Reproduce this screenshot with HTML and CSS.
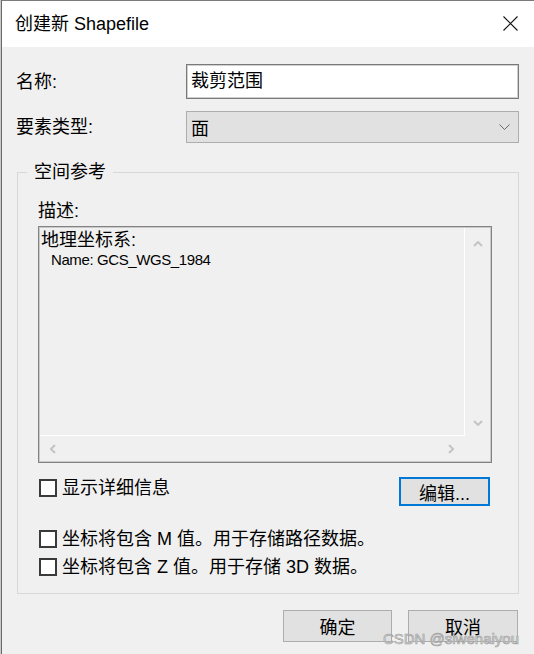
FILE: index.html
```html
<!DOCTYPE html>
<html lang="zh-CN">
<head>
<meta charset="utf-8">
<title>创建新 Shapefile</title>
<link rel="stylesheet" href="styles.css">
</head>
<body>
<div class="window">
  <div class="titlebar">
    <span class="title">创建新 Shapefile</span>
    <svg class="close" width="15" height="15" viewBox="0 0 15 15"><path d="M0.5 0.5 L14.5 14.5 M14.5 0.5 L0.5 14.5" stroke="#111" stroke-width="1.1" fill="none"/></svg>
  </div>
  <div class="content">
    <div class="form">
      <span class="lbl">名称:</span>
      <div class="input">裁剪范围</div>
      <span class="lbl">要素类型:</span>
      <div class="select"><span>面</span><svg width="11" height="6" viewBox="0 0 11 6"><path d="M0.5 0.5 L5.5 5.5 L10.5 0.5" stroke="#6a6a6a" stroke-width="1" fill="none"/></svg></div>
    </div>
    <fieldset class="group">
      <legend class="legend">空间参考</legend>
      <div class="group-inner">
        <div class="lbl desc">描述:</div>
        <div class="textbox">
          <div class="text-area">
            <div class="line1">地理坐标系:</div>
            <div class="line2">Name: GCS_WGS_1984</div>
          </div>
          <div class="vscroll">
            <svg width="10" height="6" viewBox="0 0 10 6"><path d="M1 5 L5 1 L9 5" stroke="#c4c4c4" stroke-width="2" fill="none"/></svg>
            <svg width="10" height="6" viewBox="0 0 10 6"><path d="M1 1 L5 5 L9 1" stroke="#c4c4c4" stroke-width="2" fill="none"/></svg>
          </div>
          <div class="hscroll">
            <svg width="6" height="10" viewBox="0 0 6 10"><path d="M5 1 L1 5 L5 9" stroke="#c4c4c4" stroke-width="2" fill="none"/></svg>
            <svg width="6" height="10" viewBox="0 0 6 10"><path d="M1 1 L5 5 L1 9" stroke="#c4c4c4" stroke-width="2" fill="none"/></svg>
          </div>
          <div class="corner"></div>
        </div>
        <div class="detail-row">
          <div class="check"><span class="box"></span><span>显示详细信息</span></div>
          <div class="btn btn-focus">编辑...</div>
        </div>
        <div class="check check-m"><span class="box"></span><span>坐标将包含 M 值。用于存储路径数据。</span></div>
        <div class="check check-z"><span class="box"></span><span>坐标将包含 Z 值。用于存储 3D 数据。</span></div>
      </div>
    </fieldset>
    <div class="buttons">
      <div class="btn btn-ok">确定</div>
      <div class="btn btn-cancel">取消</div>
    </div>
  </div>
  <div class="watermark">CSDN @siwenaiyou</div>
</div>
</body>
</html>
```
FILE: styles.css
```css
html, body {
  margin: 0;
  padding: 0;
}
body {
  width: 534px;
  height: 654px;
  overflow: hidden;
  background: #c9c9c9;
  font-family: "Liberation Sans", "Noto Sans CJK SC", sans-serif;
  color: #000;
}
.window {
  position: relative;
  margin-left: 1px;
  width: 533px;
  height: 654px;
  box-sizing: border-box;
  border-top: 1px solid #7a7a7a;
  border-left: 1px solid #6a6a6a;
  background: #f0f0f0;
}
.titlebar {
  height: 46px;
  background: #fff;
  display: flex;
  align-items: center;
  justify-content: space-between;
  padding: 0 16px 0 13px;
}
.title {
  font-size: 18px;
  line-height: 24px;
}
.close {
  display: block;
  margin-top: -1px;
}
.content {
  padding: 17px 15px 0 14px;
}
.form {
  display: grid;
  grid-template-columns: 170px 1fr;
  row-gap: 12px;
  align-items: center;
}
.lbl {
  font-size: 18px;
  line-height: 24px;
}
.input {
  height: 35px;
  box-sizing: border-box;
  border: 1px solid #7a7a7a;
  box-shadow: inset 0 0 0 1px #cfcfcf;
  background: #fff;
  padding-left: 4px;
  font-size: 18px;
  line-height: 33px;
}
.select {
  height: 32px;
  box-sizing: border-box;
  border: 1px solid #adadad;
  background: #e1e1e1;
  display: flex;
  align-items: center;
  justify-content: space-between;
  padding: 0 8px 0 4px;
  font-size: 18px;
}
.select svg {
  display: block;
}
.group {
  margin: 17px 0 0 1px;
  padding: 0 0 14px 9px;
  border: 1px solid #d8d8d8;
  min-width: 0;
}
.legend {
  padding: 0 7px;
  font-size: 18px;
  line-height: 24px;
}
.group-inner {
  padding: 0 26px 0 11px;
}
.desc {
  margin-top: 15px;
}
.textbox {
  margin-top: 3px;
  height: 237px;
  box-sizing: border-box;
  border: 1px solid #838383;
  box-shadow: inset 0 0 0 1px #c9c9c9;
  padding: 1px;
  display: grid;
  grid-template-columns: 1fr 25px;
  grid-template-rows: 1fr 25px;
}
.text-area {
  border-right: 1px solid #fff;
  border-bottom: 1px solid #fff;
  padding: 2px 0 0 1px;
}
.line1 {
  font-size: 18px;
  line-height: 20px;
}
.line2 {
  font-size: 15px;
  line-height: 20px;
  padding-left: 10px;
  letter-spacing: -0.4px;
}
.vscroll {
  display: flex;
  flex-direction: column;
  align-items: center;
  justify-content: space-between;
  padding: 13px 0 10px;
}
.hscroll {
  display: flex;
  align-items: center;
  justify-content: space-between;
  padding: 0 11px 0 10px;
}
.vscroll svg, .hscroll svg {
  display: block;
}
.detail-row {
  margin-top: 14px;
  display: flex;
  justify-content: space-between;
  align-items: flex-start;
}
.check {
  display: flex;
  align-items: center;
  gap: 5px;
  font-size: 18px;
  line-height: 22px;
}
.box {
  width: 18px;
  height: 18px;
  box-sizing: border-box;
  border: 2px solid #3a3a3a;
  background: #fff;
  margin-left: 1px;
}
.check-m {
  margin-top: 21px;
  line-height: 24px;
}
.check-z {
  margin-top: 4px;
  line-height: 24px;
}
.btn {
  box-sizing: border-box;
  background: #e1e1e1;
  border: 1px solid #adadad;
  font-size: 18px;
  display: flex;
  align-items: center;
  justify-content: center;
}
.btn-focus {
  width: 91px;
  height: 29px;
  margin-right: 2px;
  border: 2px solid #0078d7;
}
.buttons {
  margin-top: 16px;
  display: flex;
  justify-content: flex-end;
  gap: 16px;
  padding-right: 1px;
}
.btn-ok {
  width: 109px;
  height: 32px;
}
.btn-cancel {
  width: 110px;
  height: 32px;
}
.watermark {
  position: absolute;
  right: 15px;
  bottom: 6px;
  font-size: 15px;
  line-height: 18px;
  color: #dcdcdc;
  -webkit-text-stroke: 0.6px #9a9a9a;
}
```
